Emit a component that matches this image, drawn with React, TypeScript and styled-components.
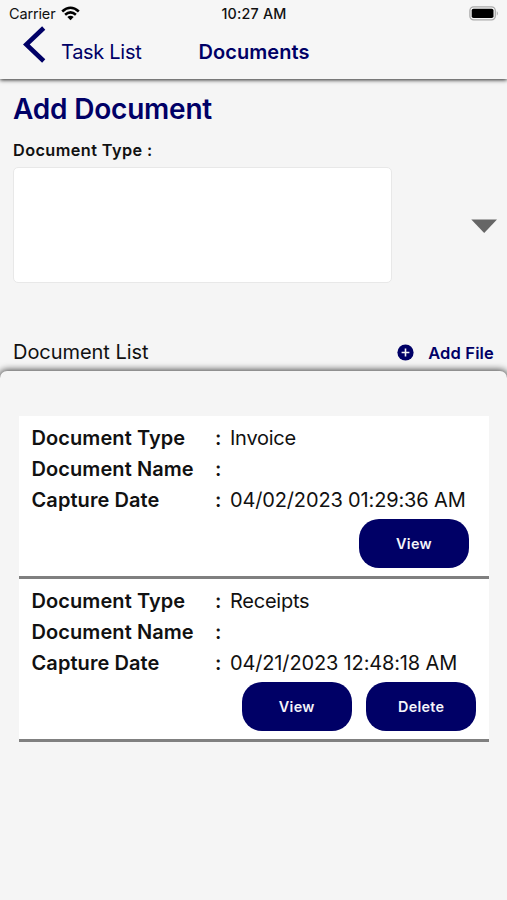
import React from "react";
import styled, { createGlobalStyle } from "styled-components";

const NAVY = "#000066";

const GlobalStyle = createGlobalStyle`
  * { box-sizing: border-box; }
  body {
    margin: 0;
    background: #f5f5f5;
    font-family: Inter, "Liberation Sans", sans-serif;
    color: #111;
    overflow: hidden;
  }
`;

const Screen = styled.div`
  width: 507px;
  height: 900px;
  display: flex;
  flex-direction: column;
  overflow: hidden;
  background: #f5f5f5;
  white-space: nowrap;
`;

const Header = styled.header`
  height: 79px;
  flex: none;
  background: #f6f6f6;
  box-shadow: 0 1px 4px rgba(0, 0, 0, 0.85);
`;

const StatusBar = styled.div`
  height: 26px;
  padding: 0 8px 0 9px;
  display: grid;
  grid-template-columns: 1fr auto 1fr;
  align-items: center;
  line-height: 26px;
`;

const Carrier = styled.div`
  display: flex;
  align-items: center;
  gap: 6px;
  padding-top: 1px;
  font-size: 14.5px;
  letter-spacing: -0.15px;
`;

const Clock = styled.div`
  font-size: 14.3px;
  font-weight: 550;
  letter-spacing: 0.2px;
  padding-top: 1px;
`;

const BatterySlot = styled.div`
  display: flex;
  justify-content: flex-end;
`;

const NavBar = styled.nav`
  height: 53px;
  display: flex;
  line-height: 53px;
  padding-left: 23px;
`;

const BackButton = styled.div`
  width: 175.5px;
  display: flex;
  gap: 15px;
  color: ${NAVY};
  font-size: 20px;
  letter-spacing: -0.3px;
`;

const NavTitle = styled.div`
  color: ${NAVY};
  font-size: 20px;
  font-weight: 600;
  letter-spacing: 0.05px;
`;

const FormSection = styled.section`
  flex: none;
  height: 253px;
  padding: 12px 10px 0 13px;
`;

const Heading = styled.h1`
  margin: 0;
  font-size: 28px;
  line-height: 37px;
  font-weight: 580;
  letter-spacing: -0.2px;
  color: ${NAVY};
`;

const FieldLabel = styled.div`
  margin-top: 10px;
  height: 30px;
  line-height: 24px;
  font-size: 16.3px;
  font-weight: 580;
  letter-spacing: 0.4px;
`;

const SelectRow = styled.div`
  display: flex;
  align-items: center;
  justify-content: space-between;
`;

const SelectBox = styled.div`
  width: 379px;
  height: 116px;
  margin-top: -1px;
  background: #fff;
  border: 1px solid #e8e8e8;
  border-radius: 5px;
`;

const ListHeader = styled.div`
  flex: none;
  height: 39px;
  padding: 0 13px 0 13px;
  display: flex;
  justify-content: space-between;
  line-height: 40px;
`;

const ListTitle = styled.div`
  font-size: 20px;
  letter-spacing: -0.05px;
`;

const AddFile = styled.div`
  display: flex;
  gap: 14px;
  color: ${NAVY};
  font-size: 16.5px;
  font-weight: 580;
  letter-spacing: 0.15px;
  line-height: 42px;
`;

const Panel = styled.main`
  flex: 1;
  padding: 45px 18px 0 19px;
  background: #f5f5f5;
  border-radius: 7px 7px 0 0;
  box-shadow: 0 0 7px 1px rgba(0, 0, 0, 0.75);
`;

const Card = styled.article`
  height: 163px;
  padding: 7px 0 0 12.5px;
  background: #fff;
  border-bottom: 3px solid #808080;
`;

const Row = styled.div`
  display: grid;
  grid-template-columns: 183.5px 15px 1fr;
  height: 31px;
  line-height: 31px;
  font-size: 20px;
`;

const Label = styled.div`
  font-weight: 570;
  letter-spacing: 0.08px;
`;

const Value = styled.div<{ $spacing: number }>`
  letter-spacing: ${(p) => p.$spacing}px;
`;

const Actions = styled.div<{ $right: number }>`
  display: flex;
  justify-content: flex-end;
  gap: 14.5px;
  padding: 3px ${(p) => p.$right}px 0 0;
`;

const ActionButton = styled.button`
  width: 110px;
  height: 49px;
  padding: 0;
  border: 0;
  border-radius: 20px;
  background: ${NAVY};
  color: #f4f4fa;
  font: 580 14.4px Inter, "Liberation Sans", sans-serif;
  letter-spacing: 0.3px;
`;

const Icon = styled.svg<{ $top?: number }>`
  display: block;
  flex: none;
  margin-top: ${(p) => p.$top ?? 0}px;
`;

const documents = [
  { type: "Invoice", name: "", date: "04/02/2023 01:29:36 AM", actions: ["View"], right: 20 },
  { type: "Receipts", name: "", date: "04/21/2023 12:48:18 AM", actions: ["View", "Delete"], right: 12.8 },
];

function WifiIcon() {
  return (
    <Icon $top={-1} width="19" height="15" viewBox="0 0 19 15">
      <g fill="none" stroke="#000" strokeWidth="2.6">
        <path d="M1.2 5.5 Q9.5 -2 17.8 5.5" />
        <path d="M4.1 8.7 Q9.5 4 14.9 8.7" />
      </g>
      <path d="M6.3 11 Q9.5 8.3 12.7 11 L9.5 14.2Z" fill="#000" />
    </Icon>
  );
}

function BatteryIcon() {
  return (
    <Icon width="30" height="15" viewBox="0 0 30 15">
      <rect x="0.9" y="0.9" width="25.4" height="13" rx="3.8" fill="#f6f6f6" stroke="#aaa" strokeWidth="1.3" />
      <rect x="2.7" y="2.7" width="21.8" height="9.4" rx="1.8" />
      <path d="M27.8 5.1 Q30 7.4 27.8 9.7Z" fill="#aaa" />
    </Icon>
  );
}

export default function App() {
  return (
    <>
      <GlobalStyle />
      <Screen>
        <Header>
          <StatusBar>
            <Carrier>Carrier <WifiIcon /></Carrier>
            <Clock>10:27 AM</Clock>
            <BatterySlot><BatteryIcon /></BatterySlot>
          </StatusBar>
          <NavBar>
            <BackButton>
              <Icon width="23" height="37" viewBox="0 0 23 37">
                <path d="M20.7 2 L3.3 18.5 L20.7 35" fill="none" stroke={NAVY} strokeWidth="4.6" />
              </Icon>
              Task List
            </BackButton>
            <NavTitle>Documents</NavTitle>
          </NavBar>
        </Header>
        <FormSection>
          <Heading>Add Document</Heading>
          <FieldLabel>Document Type :</FieldLabel>
          <SelectRow>
            <SelectBox />
            <Icon $top={1} width="26" height="14" viewBox="0 0 26 14">
              <path d="M0.3 0.5 H26 L13.2 14Z" fill="#666" />
            </Icon>
          </SelectRow>
        </FormSection>
        <ListHeader>
          <ListTitle>Document List</ListTitle>
          <AddFile>
            <Icon $top={11.5} width="17" height="17" viewBox="0 0 17 17">
              <circle cx="8.5" cy="8.5" r="8.1" fill={NAVY} />
              <path d="M8.5 4.6V12.4M4.6 8.5H12.4" stroke="#f5f5f5" strokeWidth="1.6" />
            </Icon>
            Add File
          </AddFile>
        </ListHeader>
        <Panel>
          {documents.map((doc) => (
            <Card key={doc.date}>
              <Row><Label>Document Type</Label><Label>:</Label><Value $spacing={-0.25}>{doc.type}</Value></Row>
              <Row><Label>Document Name</Label><Label>:</Label><Value $spacing={-0.2}>{doc.name}</Value></Row>
              <Row><Label>Capture Date</Label><Label>:</Label><Value $spacing={-0.15}>{doc.date}</Value></Row>
              <Actions $right={doc.right}>
                {doc.actions.map((action) => <ActionButton key={action}>{action}</ActionButton>)}
              </Actions>
            </Card>
          ))}
        </Panel>
      </Screen>
    </>
  );
}
